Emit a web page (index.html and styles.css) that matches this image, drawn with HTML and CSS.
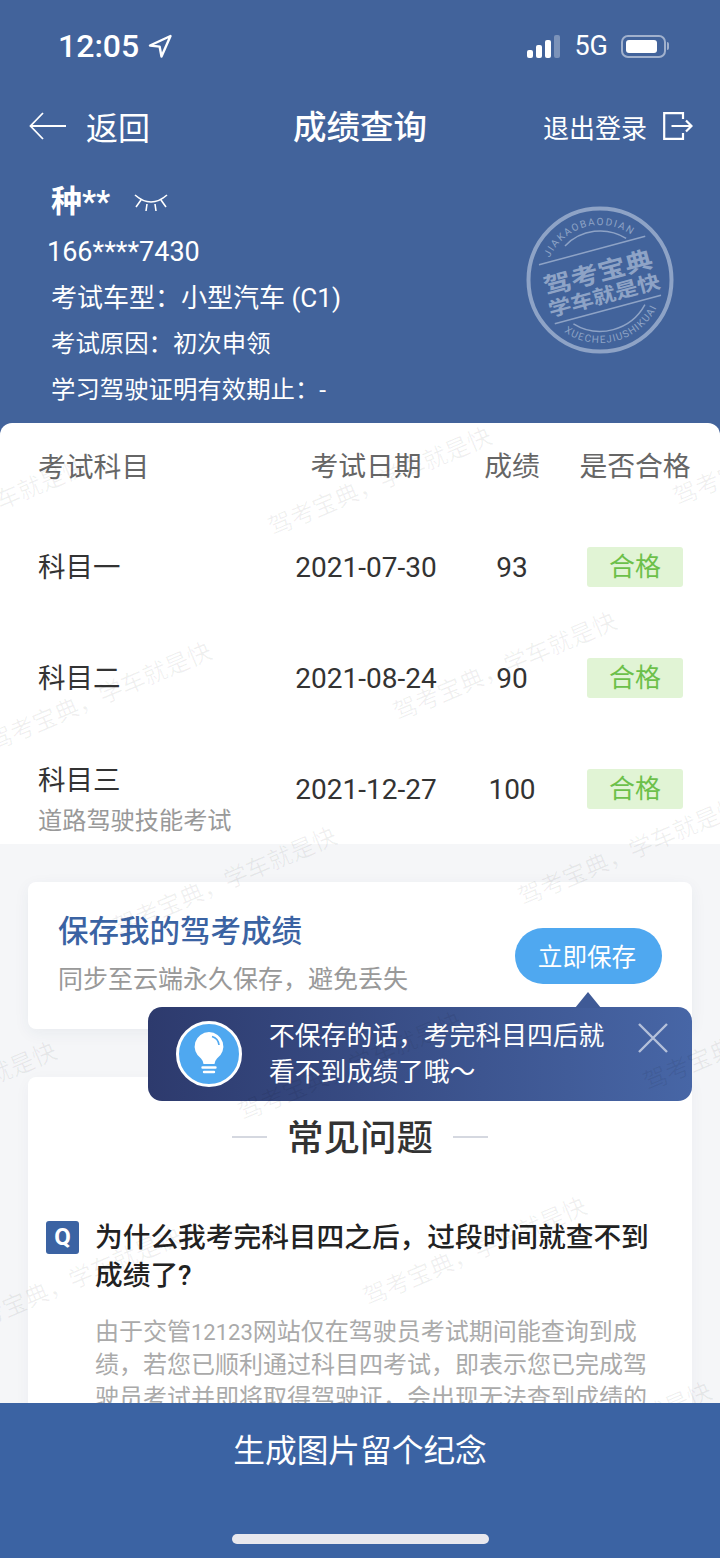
FILE: index.html
```html
<!DOCTYPE html>
<html lang="zh-CN">
<head>
    <meta charset="UTF-8">
    <meta name="viewport" content="width=device-width, initial-scale=1.0">
    <title>成绩查询</title>
    <link rel="stylesheet" href="styles.css">
</head>
<body>
    <div class="phone">
        <div class="main">
            <header class="header">
                <!-- 状态栏 -->
                <div class="status-bar">
                    <div class="status-left">
                        <span class="time">12:05</span>
                        <svg class="location" viewBox="0 0 24 24" width="24" height="24">
                            <path d="M22.5 2 L2 11.5 L11.6 12.6 L13.5 22.5 Z" fill="none" stroke="#fff" stroke-width="2.4" stroke-linejoin="round"/>
                        </svg>
                    </div>
                    <div class="status-right">
                        <div class="signal">
                            <i class="bar bar-1"></i>
                            <i class="bar bar-2"></i>
                            <i class="bar bar-3"></i>
                            <i class="bar bar-4"></i>
                        </div>
                        <span class="network">5G</span>
                        <div class="battery"><i class="battery-level"></i></div>
                    </div>
                </div>

                <!-- 导航 -->
                <nav class="nav">
                    <div class="nav-back">
                        <svg viewBox="0 0 38 28" width="38" height="28">
                            <path d="M37 14 H2 M14 1 L1.5 14 L14 27" fill="none" stroke="#fff" stroke-width="1.8"/>
                        </svg>
                        <span>返回</span>
                    </div>
                    <div class="nav-title">成绩查询</div>
                    <div class="nav-logout">
                        <span>退出登录</span>
                        <svg viewBox="0 0 30 28" width="30" height="28">
                            <path d="M20 7 V1.2 H1.2 V26.8 H20 V21 M8.5 14 H28 M23 8.5 L28.5 14 L23 19.5" fill="none" stroke="#fff" stroke-width="2.2"/>
                        </svg>
                    </div>
                </nav>

                <!-- 考生信息 -->
                <div class="info">
                    <div class="info-name">
                        <span>种**</span>
                        <svg viewBox="0 0 34 20" width="34" height="20">
                            <path d="M1 3 Q17 17 33 3 M7 8 L2 15 M27 8 L32 15 M13 12 L12 19 M21 12 L22 19" fill="none" stroke="#fff" stroke-width="1.6"/>
                        </svg>
                    </div>
                    <div class="info-phone">166****7430</div>
                    <div class="info-row info-row-large">考试车型：小型汽车 (C1)</div>
                    <div class="info-row">考试原因：初次申领</div>
                    <div class="info-row">学习驾驶证明有效期止：-</div>
                </div>

                <!-- 印章 -->
                <svg class="stamp" viewBox="0 0 150 150" width="150" height="150">
                    <defs>
                        <path id="stamp-top" d="M20 75 A55 55 0 0 1 130 75"/>
                        <path id="stamp-bottom" d="M12 75 A63 63 0 0 0 138 75"/>
                    </defs>
                    <circle cx="75" cy="75" r="71.5" fill="none" stroke="#8ea3c6" stroke-width="4"/>
                    <g transform="rotate(-15 75 75)" fill="#8ea3c6">
                        <text class="stamp-small" letter-spacing="1.6"><textPath href="#stamp-top" startOffset="50%" text-anchor="middle">JIAKAOBAODIAN</textPath></text>
                        <text class="stamp-small" letter-spacing="1.2"><textPath href="#stamp-bottom" startOffset="50%" text-anchor="middle">XUECHEJIUSHIKUAI</textPath></text>
                        <path d="M20 44.5 H130 M20 105.5 H130" stroke="#8ea3c6" stroke-width="1.5" fill="none"/>
                        <path d="M50 33 A49 49 0 0 1 111 41.5 M38 110.5 A51 51 0 0 0 112 110.5" stroke="#8ea3c6" stroke-width="1.5" fill="none"/>
                        <text class="stamp-big" transform="translate(75 76) scale(1 0.85)" text-anchor="middle">驾考宝典</text>
                        <text class="stamp-mid" transform="translate(75 98) scale(1 0.85)" text-anchor="middle">学车就是快</text>
                    </g>
                </svg>
            </header>

            <div class="content">
                <!-- 成绩表 -->
                <section class="score-table">
                    <div class="score-row score-head">
                        <div class="cell-subject">考试科目</div>
                        <div class="cell-center">考试日期</div>
                        <div class="cell-center">成绩</div>
                        <div class="cell-center">是否合格</div>
                    </div>
                    <div class="score-row">
                        <div class="cell-subject">科目一</div>
                        <div class="cell-center cell-num">2021-07-30</div>
                        <div class="cell-center cell-num">93</div>
                        <div class="cell-center"><span class="badge">合格</span></div>
                    </div>
                    <div class="score-row">
                        <div class="cell-subject">科目二</div>
                        <div class="cell-center cell-num">2021-08-24</div>
                        <div class="cell-center cell-num">90</div>
                        <div class="cell-center"><span class="badge">合格</span></div>
                    </div>
                    <div class="score-row">
                        <div class="cell-subject cell-top">科目三<div class="cell-sub">道路驾驶技能考试</div></div>
                        <div class="cell-center cell-num">2021-12-27</div>
                        <div class="cell-center cell-num">100</div>
                        <div class="cell-center"><span class="badge">合格</span></div>
                    </div>
                </section>

                <!-- 保存卡片 -->
                <section class="save-card">
                    <div>
                        <div class="save-title">保存我的驾考成绩</div>
                        <div class="save-desc">同步至云端永久保存，避免丢失</div>
                    </div>
                    <button class="save-button">立即保存</button>

                    <div class="tip">
                        <svg class="tip-icon" viewBox="0 0 66 66" width="66" height="66">
                            <circle cx="33" cy="33" r="31.5" fill="#4fa8f0" stroke="#fff" stroke-width="3"/>
                            <path d="M33 11 A14.5 14.5 0 0 1 41 37.5 Q39 39.5 38.5 43 H27.5 Q27 39.5 25 37.5 A14.5 14.5 0 0 1 33 11 Z" fill="#fff"/>
                            <path d="M36 15.5 A10 10 0 0 1 43 24" fill="none" stroke="#4fa8f0" stroke-width="1.6"/>
                            <path d="M26.5 46.5 H39.5 M28 51 H38" stroke="#fff" stroke-width="2.4" stroke-linecap="round"/>
                        </svg>
                        <p class="tip-text">不保存的话，考完科目四后就<br>看不到成绩了哦～</p>
                        <svg class="tip-close" viewBox="0 0 30 30" width="30" height="30">
                            <path d="M1 1 L29 29 M29 1 L1 29" stroke="#fff" stroke-opacity="0.6" stroke-width="2.4"/>
                        </svg>
                    </div>
                </section>

                <!-- 常见问题 -->
                <section class="faq">
                    <h2 class="faq-heading">常见问题</h2>
                    <div class="faq-question">
                        <span class="faq-q">Q</span>
                        <div>为什么我考完科目四之后，过段时间就查不到成绩了?</div>
                    </div>
                    <p class="faq-answer">由于交管<span class="faq-digits">12123</span>网站仅在驾驶员考试期间能查询到成绩，若您已顺利通过科目四考试，即表示您已完成驾驶员考试并即将取得驾驶证，会出现无法查到成绩的情况。</p>
                </section>

                <!-- 水印 -->
                <div class="watermarks">
                    <span class="wm wm-1">驾考宝典，学车就是快</span>
                    <span class="wm wm-2">驾考宝典，学车就是快</span>
                    <span class="wm wm-3">驾考宝典，学车就是快</span>
                    <span class="wm wm-4">驾考宝典，学车就是快</span>
                    <span class="wm wm-5">驾考宝典，学车就是快</span>
                    <span class="wm wm-6">驾考宝典，学车就是快</span>
                    <span class="wm wm-7">驾考宝典，学车就是快</span>
                    <span class="wm wm-8">驾考宝典，学车就是快</span>
                    <span class="wm wm-9">驾考宝典，学车就是快</span>
                    <span class="wm wm-10">驾考宝典，学车就是快</span>
                    <span class="wm wm-11">驾考宝典，学车就是快</span>
                    <span class="wm wm-12">驾考宝典，学车就是快</span>
                    <span class="wm wm-13">驾考宝典，学车就是快</span>
                </div>
            </div>
        </div>

        <footer class="footer">
            <div class="footer-text">生成图片留个纪念</div>
            <div class="home-bar"></div>
        </footer>
    </div>
</body>
</html>
```

FILE: styles.css
```css
* {
    box-sizing: border-box;
}
body {
    margin: 0;
    font-family: Roboto, "Noto Sans CJK SC", sans-serif;
    background-color: #f5f6f8;
}
.phone {
    width: 720px;
    height: 1558px;
    display: flex;
    flex-direction: column;
    overflow: hidden;
}
.main {
    flex: 1;
    min-height: 0;
    overflow: hidden;
}

/* 顶部 */
.header {
    position: relative;
    height: 435px;
    background-color: #42639b;
    color: white;
}
.status-bar {
    height: 92px;
    padding: 0 54px 0 58px;
    display: flex;
    justify-content: space-between;
    align-items: center;
}
.status-left {
    display: flex;
    align-items: center;
    gap: 9px;
}
.time {
    font-size: 32px;
    font-weight: 500;
}
.status-right {
    display: flex;
    align-items: center;
}
.signal {
    display: flex;
    align-items: flex-end;
    gap: 3px;
    height: 23px;
}
.bar {
    display: block;
    width: 6px;
    background: white;
    border-radius: 2px;
}
.bar-1 { height: 8px; }
.bar-2 { height: 13px; }
.bar-3 { height: 18px; }
.bar-4 { height: 23px; background: rgba(255, 255, 255, 0.3); }
.network {
    margin-left: 14px;
    font-size: 27px;
}
.battery {
    position: relative;
    width: 45px;
    height: 23px;
    margin-left: 13px;
    padding: 3px;
    border: 2px solid rgba(255, 255, 255, 0.5);
    border-radius: 7px;
}
.battery::after {
    content: "";
    position: absolute;
    right: -5px;
    top: 5px;
    width: 2px;
    height: 8px;
    background: rgba(255, 255, 255, 0.5);
    border-radius: 0 2px 2px 0;
}
.battery-level {
    display: block;
    width: 31px;
    height: 100%;
    background: white;
    border-radius: 3px;
}
.nav {
    height: 68px;
    padding: 0 27px 0 29px;
    display: grid;
    grid-template-columns: 1fr auto 1fr;
    align-items: center;
}
.nav-back {
    display: flex;
    align-items: center;
    gap: 19px;
    font-size: 32px;
}
.nav-title {
    padding: 0 2px 4px 0;
    font-size: 33.5px;
    font-weight: 500;
}
.nav-logout {
    display: flex;
    justify-content: flex-end;
    align-items: center;
    gap: 16px;
    font-size: 26px;
}
.info {
    padding: 19px 0 0 51px;
    font-size: 24.4px;
    line-height: 46px;
}
.info-name {
    display: flex;
    align-items: center;
    gap: 24px;
    font-size: 31px;
    font-weight: 700;
}
.info-phone {
    margin-left: -4px;
    margin-top: 4px;
    font-size: 27px;
}
.info-row-large {
    font-size: 26px;
}
.stamp {
    position: absolute;
    left: 525px;
    top: 205px;
}
.stamp-small {
    font-size: 10px;
}
.stamp-big {
    font-size: 28px;
    font-weight: 700;
}
.stamp-mid {
    font-size: 23px;
    font-weight: 700;
}

/* 内容 */
.content {
    position: relative;
    margin-top: -12px;
}
.score-table {
    height: 421px;
    background: white;
    border-radius: 12px 12px 0 0;
    color: #333;
    font-size: 27.5px;
}
.score-row {
    display: grid;
    grid-template-columns: 272px 188px 104px 142px;
    height: 111px;
    align-items: center;
    line-height: 40px;
}
.score-head {
    height: 88px;
    color: #666;
    font-size: 27.8px;
}
.cell-subject {
    padding-left: 38px;
    padding-top: 2px;
}
.cell-top {
    align-self: start;
    padding-top: 28px;
}
.cell-sub {
    font-size: 24.2px;
    color: #999;
}
.cell-center {
    text-align: center;
}
.cell-num {
    padding-top: 2px;
    font-size: 28px;
}
.badge {
    display: block;
    width: 96px;
    height: 40px;
    margin: 0 auto;
    line-height: 41px;
    font-size: 26px;
    color: #6cc04a;
    background: #e1f4d5;
    border-radius: 3px;
}
.save-card {
    position: relative;
    z-index: 2;
    height: 147px;
    margin: 38px 28px 0;
    padding: 0 30px;
    display: flex;
    justify-content: space-between;
    align-items: center;
    background: white;
    border-radius: 8px;
    box-shadow: 0 4px 16px rgba(40, 60, 100, 0.06);
}
.save-title {
    font-size: 30.5px;
    font-weight: 500;
    line-height: 40px;
    color: #3b63a3;
}
.save-desc {
    margin-top: 8px;
    font-size: 25px;
    line-height: 40px;
    color: #999;
}
.save-button {
    width: 147px;
    height: 56px;
    padding: 0 3px 2px 0;
    border: none;
    border-radius: 28px;
    background: #4fa8f0;
    color: white;
    font-family: inherit;
    font-size: 24.6px;
}
.tip {
    position: absolute;
    left: 120px;
    top: 125px;
    width: 544px;
    height: 94px;
    padding-left: 28px;
    display: flex;
    align-items: center;
    gap: 27px;
    color: white;
    background: linear-gradient(90deg, #2d3a6d, #4766a6);
    border-radius: 14px;
}
.tip::before {
    content: "";
    position: absolute;
    left: 427px;
    top: -15px;
    border-left: 13px solid transparent;
    border-right: 13px solid transparent;
    border-bottom: 16px solid #3f5a96;
}
.tip-text {
    margin: 0;
    font-size: 25.8px;
    line-height: 36px;
}
.tip-close {
    position: absolute;
    right: 24px;
    top: 16px;
}
.faq {
    height: 400px;
    margin: 48px 28px 0;
    padding: 42px 38px 0 18px;
    background: white;
    border-radius: 8px;
    box-shadow: 0 4px 16px rgba(40, 60, 100, 0.04);
}
.faq-heading {
    margin: 0;
    display: flex;
    justify-content: center;
    align-items: center;
    gap: 20px;
    font-size: 36.5px;
    font-weight: 500;
    line-height: 40px;
    color: #333;
    padding-left: 20px;
}
.faq-heading::before,
.faq-heading::after {
    content: "";
    width: 35px;
    height: 2px;
    margin-bottom: 4px;
    background: #d5d8e0;
}
.faq-question {
    margin-top: 60px;
    display: flex;
    align-items: flex-start;
    gap: 16px;
    font-size: 27.7px;
    font-weight: 500;
    line-height: 38px;
    color: #222;
}
.faq-q {
    flex: none;
    width: 33px;
    height: 33px;
    margin-top: 2px;
    line-height: 33px;
    text-align: center;
    font-size: 24px;
    font-weight: 700;
    color: white;
    background: #3b63a3;
    border-radius: 3px;
}
.faq-answer {
    margin: 21px 0 0 49px;
    font-size: 24px;
    line-height: 33px;
    color: #aaa;
}
.faq-digits {
    font-size: 22px;
}

/* 水印 */
.watermarks {
    position: absolute;
    inset: 0;
    z-index: 3;
    margin: -3px 0 0 5px;
    pointer-events: none;
}
.wm {
    position: absolute;
    width: 240px;
    font-size: 24px;
    line-height: 34px;
    white-space: nowrap;
    color: rgba(0, 0, 0, 0.06);
    transform: rotate(-23deg);
}
.wm-1 { left: -150px; top: 75px; }
.wm-2 { left: 255px; top: 45px; }
.wm-3 { left: 660px; top: 15px; }
.wm-4 { left: -25px; top: 260px; }
.wm-5 { left: 380px; top: 230px; }
.wm-6 { left: 100px; top: 445px; }
.wm-7 { left: 505px; top: 415px; }
.wm-8 { left: -180px; top: 660px; }
.wm-9 { left: 225px; top: 630px; }
.wm-10 { left: 630px; top: 600px; }
.wm-11 { left: -55px; top: 845px; }
.wm-12 { left: 350px; top: 815px; }
.wm-13 { left: 475px; top: 1000px; }

/* 底部 */
.footer {
    position: relative;
    flex: none;
    height: 155px;
    padding-top: 29px;
    text-align: center;
    background: #3b63a3;
}
.footer-text {
    font-size: 31.7px;
    line-height: 40px;
    color: white;
}
.home-bar {
    position: absolute;
    left: 232px;
    bottom: 14px;
    width: 257px;
    height: 10px;
    background: #e8e8ee;
    border-radius: 5px;
}
```
